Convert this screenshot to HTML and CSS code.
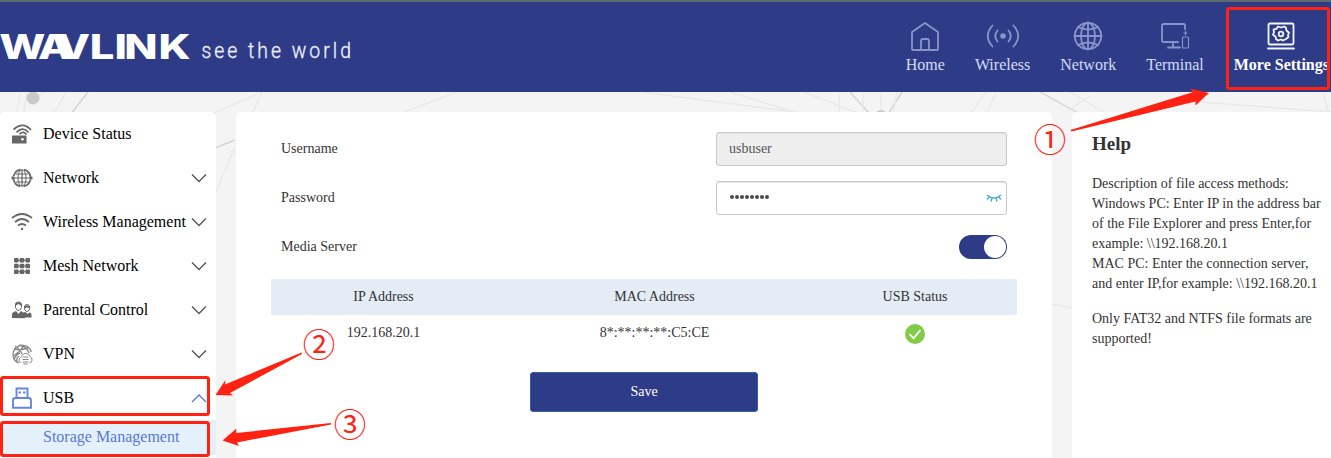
FILE: index.html
```html
<!DOCTYPE html>
<html lang="en">
<head>
<meta charset="utf-8">
<title>WAVLINK - Storage Management</title>
<link rel="stylesheet" href="styles.css">
</head>
<body>
<header class="header">
  <svg class="logo" width="370" height="40" viewBox="0 26 370 40">
    <text class="brand" transform="translate(0 59) scale(1.3 1)" x="-0.5 29.3 43.5 69 88 95.5 122">WAVLINK</text>
    <text class="slogan" transform="translate(201.500 58) scale(.9 1)" x="0" y="0" textLength="166">see the world</text>
  </svg>
  <nav class="topnav">
    <a class="tab"><svg class="tab-icon" viewBox="0 0 32 32"><path d="M3 29V12L16 3l13 9v17q0 1-1 1H4q-1 0-1-1zM12 29V21q0-2 2-2h4q2 0 2 2v8"/></svg>Home</a>
    <a class="tab"><svg class="tab-icon wide" viewBox="0 0 34 32"><circle cx="17" cy="16" r="2.800" class="fill"/><path d="M11.500 10.500Q7 16 11.500 21.500M22.500 10.500Q27 16 22.500 21.500M6.500 5.500Q-3 16 6.500 26.500M27.500 5.500Q37 16 27.500 26.500"/></svg>Wireless</a>
    <a class="tab"><svg class="tab-icon" viewBox="0 0 32 32"><circle cx="16" cy="16" r="13.200"/><ellipse cx="16" cy="16" rx="7" ry="13.200"/><path d="M16 2.500v27M2.500 16h27M6 7q10 5 20 0M6 25q10-5 20 0"/></svg>Network</a>
    <a class="tab"><svg class="tab-icon" viewBox="0 0 32 32"><path d="M19 22H4.500Q3 22 3 20.500v-15Q3 4 4.500 4h20Q26 4 26 5.500V9M14 22v5M9 27.500h12"/><rect x="23.500" y="17" width="6" height="11" rx="1" class="thin"/><path class="thin" d="M26.500 11v4M25 13h3"/></svg>Terminal</a>
    <a class="tab tab-more active"><svg class="tab-icon" viewBox="0 0 32 32"><rect x="3.500" y="3.500" width="25" height="21" rx="1.500"/><path d="M3 28.500h26"/><path d="M13 6.500l3 1 3-1 2 1.300.5 2.700 2.500 2.200-1 2.300 0.500 2-2.500 2-3 1.500-2-1-3 1-2-1.500-.5-2.500-2.500-1.800 1-2.700-.5-2.300 3-1z"/><circle cx="16" cy="14" r="2.300"/></svg>More Settings</a>
  </nav>
</header>
<svg class="backdrop" viewBox="0 0 1331 366" width="1331" height="366">
  <g class="mesh">
    <path d="M21 0l-5 24M27 0l-4 24M37 4l12-6"/><path class="strong" d="M88 0L70 23"/><path d="M66 0L54 22M262 0L252 22M262 0L205 25M400 22L456 0M642 0L810 22M730 0L800 22M804 0L860 22"/>
    <path class="strong" d="M850 0l20 22M902 0l-14 22M235 48L205 60"/><path d="M881 0v22M839 0v22M863 0v22M897 0l-4 22M986 0l-16 22M996 0l-9 22"/>
    <path class="strong" d="M1040 0L1080 22"/><path d="M1070 0l37 22M1090 4l-22 15M1200 10l131 10M1323 0l6 22M235 55L205 125"/>
    <path d="M1052 212l20 4"/>
  </g>
  <circle cx="33" cy="6" r="6.500" class="node"/><circle cx="881" cy="24" r="6" class="node"/>
</svg>
<main class="layout">
  <aside class="sidebar">
    <a class="item"><svg class="side-icon" viewBox="0 0 22 22"><rect x="1" y="12.500" width="14.500" height="8" rx=".6" class="solid"/><circle cx="11.500" cy="16.300" r="1.300" class="white"/><path d="M2.500 6.500Q12-2 20 7M5.500 9.300Q12 3 17.500 9.500M8.500 11Q12.500 7.500 15.500 11.500"/></svg><span>Device Status</span></a>
    <a class="item"><svg class="side-icon" viewBox="0 0 22 22"><circle cx="11" cy="11" r="8.500" stroke-dasharray="10 3.350" stroke-dashoffset="-1.700"/><ellipse cx="11" cy="11" rx="4" ry="8.300" stroke-width="1"/><path stroke-width="1.200" d="M11 3v16M5 7h12M3 11h16M5 15h12"/><circle cx="2" cy="11" r="1.700" class="solid"/><circle cx="20" cy="11" r="1.700" class="solid"/></svg><span>Network</span><svg class="chev" viewBox="0 0 16 10"><path d="M1 1.500l7 7 7-7"/></svg></a>
    <a class="item"><svg class="side-icon" viewBox="0 0 22 22"><path d="M1 7Q11-1 21 7M4 11Q11 5 18 11M7 14.500Q11 11.500 15 14.500"/><circle cx="11" cy="18" r="1.200" class="solid"/></svg><span>Wireless Management</span><svg class="chev" viewBox="0 0 16 10"><path d="M1 1.500l7 7 7-7"/></svg></a>
    <a class="item"><svg class="side-icon" viewBox="0 0 22 22"><g class="solid"><rect x="3" y="3" width="4.600" height="4.600" rx="1"/><rect x="8.700" y="3" width="4.600" height="4.600" rx="1"/><rect x="14.400" y="3" width="4.600" height="4.600" rx="1"/><rect x="3" y="8.700" width="4.600" height="4.600" rx="1"/><rect x="8.700" y="8.700" width="4.600" height="4.600" rx="1"/><rect x="14.400" y="8.700" width="4.600" height="4.600" rx="1"/><rect x="3" y="14.400" width="4.600" height="4.600" rx="1"/><rect x="8.700" y="14.400" width="4.600" height="4.600" rx="1"/><rect x="14.400" y="14.400" width="4.600" height="4.600" rx="1"/></g><path stroke-width="1" d="M4 5.300h14M4 11h14M4 16.700h14"/></svg><span>Mesh Network</span><svg class="chev" viewBox="0 0 16 10"><path d="M1 1.500l7 7 7-7"/></svg></a>
    <a class="item"><svg class="side-icon" viewBox="0 0 22 22"><path class="solid" d="M1 19v-4q0-1.500 2-2l2-1 2.500 3L10 12l2 1.500 2.500-.5 2 2 2-1.500q2 .5 2 2V18.500h-6.500v.7z"/><path stroke-width="1" d="M4.500 8.500V5.500q0-2.500 3-2.500t3 2.500v3q-1 3-3 3t-3-3zM13.500 10V8q0-2.500 2.500-2.500T18.700 8v2q-1 2.500-2.700 2.500T13.500 10z"/><path d="M4.500 6Q7 2.500 10.500 6M13.500 8.500q2.500-2 5 0"/></svg><span>Parental Control</span><svg class="chev" viewBox="0 0 16 10"><path d="M1 1.500l7 7 7-7"/></svg></a>
    <a class="item"><svg class="side-icon muted" viewBox="0 0 22 22"><path d="M7.500 20A9.300 9.300 0 1 1 20.300 9M3 5.500q6 3 14-1M8 2q8 2 10 8M2 13q7-4 11-11M4 3q5 3 7 8M3 17q1-5 6-7M6 19q-1-4 2-6"/><path d="M9.500 20q-2.500-1.500-1-4.500 1-1.500 2-1.500 1-4 5-3.500 3 .5 3.500 3 2.500 1 2 4-.5 2-2.500 2.500" stroke-width="1"/><path d="M12 14h5M11.500 16.500h6M11.500 19h6M12.500 21h4" stroke-width="1.200"/></svg><span>VPN</span><svg class="chev" viewBox="0 0 16 10"><path d="M1 1.500l7 7 7-7"/></svg></a>
    <a class="item open"><svg class="side-icon" viewBox="0 0 22 22"><path stroke-width="1.900" d="M5.500 11V1.500h11V11M2 20.700V13.500q0-2.500 2.500-2.500h13q2.500 0 2.500 2.500v7.200z"/><path d="M7.500 5.500h2.500M12 5.500h2.500" stroke-width="1.800"/></svg><span>USB</span><svg class="chev" viewBox="0 0 16 10"><path d="M1 9l7-7 7 7"/></svg></a>
    <a class="subitem">Storage Management</a>
  </aside>
  <section class="panel">
    <div class="row"><label>Username</label><div class="field disabled">usbuser</div></div>
    <div class="row"><label>Password</label><div class="field"><span class="dots"><i></i><i></i><i></i><i></i><i></i><i></i><i></i><i></i></span><svg class="eye" viewBox="0 0 16 10" width="16" height="10"><path d="M1 2q7 6 14 0M3.200 4L1 6.500M6 5l-1 3.500M10 5l1 3.500M12.800 4L15 6.500"/></svg></div></div>
    <div class="row"><label>Media Server</label><div class="switch"><span class="knob"></span></div></div>
    <div class="table">
      <div class="cell head">IP Address</div><div class="cell head">MAC Address</div><div class="cell head">USB Status</div>
      <div class="cell">192.168.20.1</div><div class="cell">8*:**:**:**:C5:CE</div>
      <div class="cell status"><svg viewBox="0 0 20 20" width="20" height="20"><circle cx="10" cy="10" r="10" class="ok"/><path d="M4.500 10l4 4.300L15.500 6"/></svg></div>
    </div>
    <button class="save">Save</button>
  </section>
  <aside class="help">
    <h2>Help</h2>
    <p>Description of file access methods:<br>Windows PC: Enter IP in the address bar<br>of the File Explorer and press Enter,for<br>example: \\192.168.20.1<br>MAC PC: Enter the connection server,<br>and enter IP,for example: \\192.168.20.1</p>
    <p>Only FAT32 and NTFS file formats are<br>supported!</p>
  </aside>
</main>
<svg class="notes" viewBox="0 0 1331 458" width="1331" height="458">
  <g class="boxes"><rect x="1227.500" y="8.500" width="101" height="80" rx="2"/><rect x="1.500" y="377.500" width="207" height="37" rx="2"/><rect x="1.500" y="422.500" width="207" height="33" rx="2"/></g>
  <g class="arrows">
    <path d="M1070.500 130L1192.500 92.300 1190.500 88.500 1209 93 1195.500 105.500 1195.500 101.500 1071.500 131.500z"/>
    <path d="M301.500 352.500L225 384.500 225.500 380 215.500 395 233 395.500 230 393 302 354z"/>
    <path d="M331 423L236 433 236.500 428.500 222.500 440.500 239 446 237 442.500 331 424.500z"/>
  </g>
  <g class="numbers"><text x="1050" y="152">①</text><text x="319" y="357">②</text><text x="350" y="437">③</text></g>
</svg>
</body>
</html>
```
FILE: styles.css
```css
* { box-sizing: border-box; }
body {
  margin: 0;
  width: 1331px;
  height: 458px;
  overflow: hidden;
  position: relative;
  background: #f4f4f4;
  color: #333;
  font: 14px/20px "Liberation Serif", "Times New Roman", serif;
}
svg { display: block; flex: none; fill: none; }

.header {
  height: 92px;
  display: flex;
  justify-content: space-between;
  background: #2e3c88;
  border-top: 2px solid #5b6b70;
}
.logo { margin-top: 24px; fill: #fff; }
.brand { font: 800 33.5px Inter, sans-serif; }
.slogan { font: 300 21.5px Roboto, sans-serif; fill: #eef0fa; stroke: #eef0fa; stroke-width: .35; }
.topnav { display: flex; gap: 30px; padding: 18px 2px 0 0; overflow: hidden; }
.tab {
  display: flex;
  flex-direction: column;
  align-items: center;
  gap: 3px;
  color: #d3ddfa;
  font-size: 16px;
  line-height: 20px;
  white-space: nowrap;
}
.tab-icon { width: 32px; height: 32px; stroke: #8796c9; stroke-width: 1.8; stroke-linejoin: round; stroke-linecap: round; }
.tab-icon.wide { width: 34px; }
.tab-icon .fill { fill: #8796c9; stroke: none; }
.tab-icon .thin { stroke-width: 1.1; }
.active { color: #fff; font-weight: bold; }
.active .tab-icon { stroke: #f2f4ff; }

.backdrop { position: absolute; left: 0; top: 92px; }
.mesh { stroke: #e9e9e9; stroke-width: 1.4; }
.mesh .strong { stroke: #d4d4d4; }
.node { fill: #c9c9c9; }

.layout {
  position: relative;
  display: grid;
  grid-template-columns: 216px 816px 259px;
  column-gap: 20px;
  padding-top: 20px;
  height: 366px;
}
.sidebar, .panel, .help { background: #fff; border-radius: 5px 5px 0 0; }
.help { border-top-right-radius: 0; }
.item {
  height: 44px;
  display: flex;
  align-items: center;
  padding: 0 9px 0 11px;
  color: #000;
  font-size: 16px;
  white-space: nowrap;
}
.item span { flex: 1; margin-left: 10px; }
.side-icon { width: 22px; height: 22px; stroke: #666; stroke-width: 1.8; }
.side-icon .solid { fill: #666; stroke: none; }
.side-icon .white { fill: #fff; stroke: none; }
.side-icon.muted { stroke: #888; stroke-width: 1.4; }
.chev { width: 16px; height: 10px; stroke: #555; stroke-width: 1.4; }
.open .side-icon { stroke: #6687df; }
.open .chev { stroke: #5b79cf; }
.subitem {
  display: block;
  height: 35px;
  padding-left: 43px;
  background: #e4f1fb;
  color: #5b78d4;
  font-size: 16px;
  line-height: 33px;
}

.panel { padding: 20px 35px 0; }
.row {
  height: 34px;
  margin: 0 10px 15px;
  display: flex;
  justify-content: space-between;
  align-items: center;
}
.field {
  width: 291px;
  height: 34px;
  display: flex;
  align-items: center;
  justify-content: space-between;
  padding: 0 4px 0 12px;
  border: 1px solid #c8c8c8;
  border-radius: 3px;
  box-shadow: inset 0 1px 1px #e5e5e5;
  color: #555;
}
.disabled { background: #eee; }
.dots { display: flex; gap: 1px; padding: 0 0 3px 1px; }
.dots i { width: 4px; height: 4px; border-radius: 50%; background: #4a4a4a; }
.eye { stroke: #4da6e0; stroke-width: 1.4; }
.switch { width: 48px; height: 24px; padding: 1px; border-radius: 12px; background: #2e3c88; }
.knob { display: block; width: 22px; height: 22px; margin-left: auto; border-radius: 50%; background: #fff; }
.table { display: grid; grid-template: 36px 57px / 225px 317px 204px; }
.cell { height: 36px; line-height: 35px; text-align: center; }
.head { background: #e4ecf6; }
.status { padding-top: 9px; display: flex; justify-content: center; }
.status path { stroke: #fff; stroke-width: 1.8; }
.ok { fill: #82cb49; }
.save {
  display: block;
  width: 228px;
  height: 40px;
  margin: 0 auto;
  border: 1px solid #2f62a3;
  border-radius: 3px;
  background: #2e3c88;
  color: #fff;
  font: inherit;
}

.help { padding: 20px 20px 0; }
.help h2 { margin: 0 0 18px; font-size: 19px; line-height: 24px; }
.help p { margin: 0 0 15px; white-space: nowrap; }

.notes { position: absolute; left: 0; top: 0; }
.boxes { stroke: #ff2213; stroke-width: 3; }
.arrows { fill: #ff2213; }
.numbers { fill: #ff2213; font: 32.5px "Noto Sans CJK SC", sans-serif; text-anchor: middle; }
```
